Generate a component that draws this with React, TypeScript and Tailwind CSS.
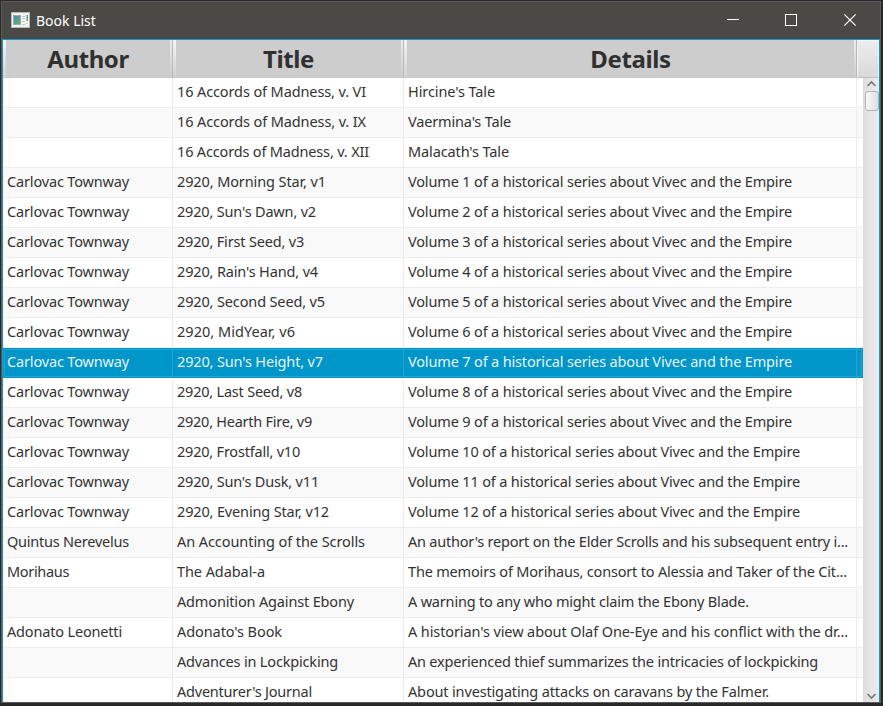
import React, { useLayoutEffect, useRef } from "react";

// A cell holds its text and the width in pixels that the text takes.
type Cell = [string, number];
type Book = [Cell, Cell, Cell];

const none: Cell = ["", 0];
const townway: Cell = ["Carlovac Townway", 122];
const volume = (n: number): Cell => [
  `Volume ${n} of a historical series about Vivec and the Empire`,
  n < 10 ? 384 : 392,
];

const books: Book[] = [
  [none, ["16 Accords of Madness, v. VI", 189], ["Hircine's Tale", 87]],
  [none, ["16 Accords of Madness, v. IX", 189], ["Vaermina's Tale", 103]],
  [none, ["16 Accords of Madness, v. XII", 192], ["Malacath's Tale", 101]],
  [townway, ["2920, Morning Star, v1", 149], volume(1)],
  [townway, ["2920, Sun's Dawn, v2", 139], volume(2)],
  [townway, ["2920, First Seed, v3", 127], volume(3)],
  [townway, ["2920, Rain's Hand, v4", 141], volume(4)],
  [townway, ["2920, Second Seed, v5", 148], volume(5)],
  [townway, ["2920, MidYear, v6", 118], volume(6)],
  [townway, ["2920, Sun's Height, v7", 146], volume(7)],
  [townway, ["2920, Last Seed, v8", 125], volume(8)],
  [townway, ["2920, Hearth Fire, v9", 135], volume(9)],
  [townway, ["2920, Frostfall, v10", 123], volume(10)],
  [townway, ["2920, Sun's Dusk, v11", 142], volume(11)],
  [townway, ["2920, Evening Star, v12", 152], volume(12)],
  [["Quintus Nerevelus", 122], ["An Accounting of the Scrolls", 188], ["An author's report on the Elder Scrolls and his subsequent entry i...", 440]],
  [["Morihaus", 62], ["The Adabal-a", 88], ["The memoirs of Morihaus, consort to Alessia and Taker of the Cit...", 439]],
  [none, ["Admonition Against Ebony", 177], ["A warning to any who might claim the Ebony Blade.", 341]],
  [["Adonato Leonetti", 115], ["Adonato's Book", 105], ["A historian's view about Olaf One-Eye and his conflict with the dr...", 440]],
  [none, ["Advances in Lockpicking", 161], ["An experienced thief summarizes the intricacies of lockpicking", 410]],
  [none, ["Adventurer's Journal", 135], ["About investigating attacks on caravans by the Falmer.", 361]],
];

const SELECTED = 9;

// Spreads the letter spacing evenly so that the text fills its width.
function FitText({ cell: [text, width] }: { cell: Cell }) {
  const ref = useRef<HTMLSpanElement>(null);
  useLayoutEffect(() => {
    const el = ref.current;
    if (!el || !text) return;
    el.style.letterSpacing = "0px";
    const natural = el.getBoundingClientRect().width;
    el.style.letterSpacing = `${(width - natural) / text.length}px`;
  }, [text, width]);
  return <span ref={ref}>{text}</span>;
}

function TitleBar() {
  return (
    <div className="flex h-[37px] shrink-0 items-center bg-[#4b4946] text-white">
      <svg className="-mt-px ml-[9px]" width="19" height="16" viewBox="0 0 19 16">
        <defs>
          <linearGradient id="pic" x1="0" y1="0" x2="1" y2="1">
            <stop offset="0" stopColor="#4a86b4" />
            <stop offset="1" stopColor="#66b56b" />
          </linearGradient>
        </defs>
        <rect x="0.5" y="0.5" width="18" height="15" fill="#f2f2f2" stroke="#b9b9b9" />
        <rect x="2.5" y="3.5" width="7" height="9" fill="url(#pic)" stroke="#8fa9a9" strokeWidth="0.8" />
        <path d="M11 4.5h3M11 6.5h3M11 9.5h3M11 12.5h3" stroke="#c8c8c8" />
        <rect x="15.5" y="3" width="1.5" height="6" fill="url(#pic)" />
        <path d="M15 11.5h2" stroke="#ccc" />
      </svg>
      <span className="ml-[6px] flex-1 text-[14px] leading-[20px]">Book List</span>
      <svg width="140" height="19" viewBox="0 0 140 19" fill="none" stroke="white" className="mr-[15px]">
        <path d="M2 8.5h12" />
        <rect x="60.5" y="3.5" width="11" height="11" />
        <path d="M119.3 3.3l11.4 11.4M130.7 3.3l-11.4 11.4" strokeWidth="1.2" />
      </svg>
    </div>
  );
}

function HeaderCell({ label, className }: { label: string; className: string }) {
  return (
    <div className={`flex h-[38px] shrink-0 border-b border-[#c9c9c9] bg-[#cdcdcd] ${className}`}>
      <div className="w-[3px] bg-linear-to-b from-[#f4f4f4] to-[#d2d2d2]" />
      <div className="flex-1 text-center text-[24px] leading-[38px] font-bold tracking-[-0.4px] text-[#303030]">{label}</div>
      <div className="w-[2px] bg-linear-to-b from-[#ececec] to-[#cfcfcf]" />
      <div className="w-px bg-[#b8b8b8]" />
    </div>
  );
}

function Row({ book, index }: { book: Book; index: number }) {
  const selected = index === SELECTED;
  const tone = selected
    ? "bg-[#0096c9] text-[#e6f5fa]"
    : index % 2
      ? "bg-[#f9f9f9] text-[#333] border-b border-[#ededed]"
      : "bg-white text-[#333] border-b border-[#ededed]";
  const line = selected ? "border-[#26a4d0]" : "border-[#ededed]";
  return (
    <div className={`relative flex h-[30px] shrink-0 text-[14.5px] leading-[26px] whitespace-pre ${tone}`}>
      <div className={`w-[170px] border-r pl-[4px] ${line}`}><FitText cell={book[0]} /></div>
      <div className={`w-[231px] border-r pl-[4px] ${line}`}><FitText cell={book[1]} /></div>
      <div className={`w-[453px] border-r pl-[4px] ${line}`}><FitText cell={book[2]} /></div>
      {selected && <div className="absolute inset-[1px] border border-[#26a4d0]" />}
    </div>
  );
}

function ScrollBar() {
  return (
    <div className="flex w-[16px] flex-col bg-linear-to-r from-[#dedede] to-[#ededed]">
      <svg width="16" height="13" viewBox="0 0 16 13" fill="none" stroke="#777" strokeWidth="1.6">
        <path d="M4.5 8L8.5 4L12.5 8" />
      </svg>
      <div className="h-[20px] w-[14px] self-end rounded-[3px] border border-[#b2b2b2] bg-linear-to-r from-[#f8f8f8] to-[#dfdfdf]" />
      <svg className="mt-auto" width="16" height="13" viewBox="0 0 16 13" fill="none" stroke="#777" strokeWidth="1.6">
        <path d="M4.5 5L8.5 9L12.5 5" />
      </svg>
    </div>
  );
}

export default function App() {
  return (
    <div className="h-[706px] w-[883px] overflow-hidden bg-[#292929] pt-px font-['Noto_Sans','Open_Sans',sans-serif]">
      <div className="ml-px flex h-[702px] w-[880px] flex-col border border-[#5a5a5a]">
        <TitleBar />
        <div className="flex min-h-0 flex-1 flex-col border-x border-t border-[#0f9acb]">
          <div className="flex">
            <HeaderCell label="Author" className="w-[170px]" />
            <HeaderCell label="Title" className="w-[231px]" />
            <HeaderCell label="Details" className="w-[453px]" />
            <div className="h-[38px] flex-1 border border-[#f4f4f4] border-b-[#bebebe] bg-linear-to-b from-[#ededed] to-[#d9d9d9]" />
          </div>
          <div className="flex min-h-0 flex-1">
            <div className="w-[860px] overflow-hidden bg-white">
              {books.map((book, i) => (
                <Row key={i} book={book} index={i} />
              ))}
            </div>
            <ScrollBar />
          </div>
        </div>
      </div>
    </div>
  );
}
